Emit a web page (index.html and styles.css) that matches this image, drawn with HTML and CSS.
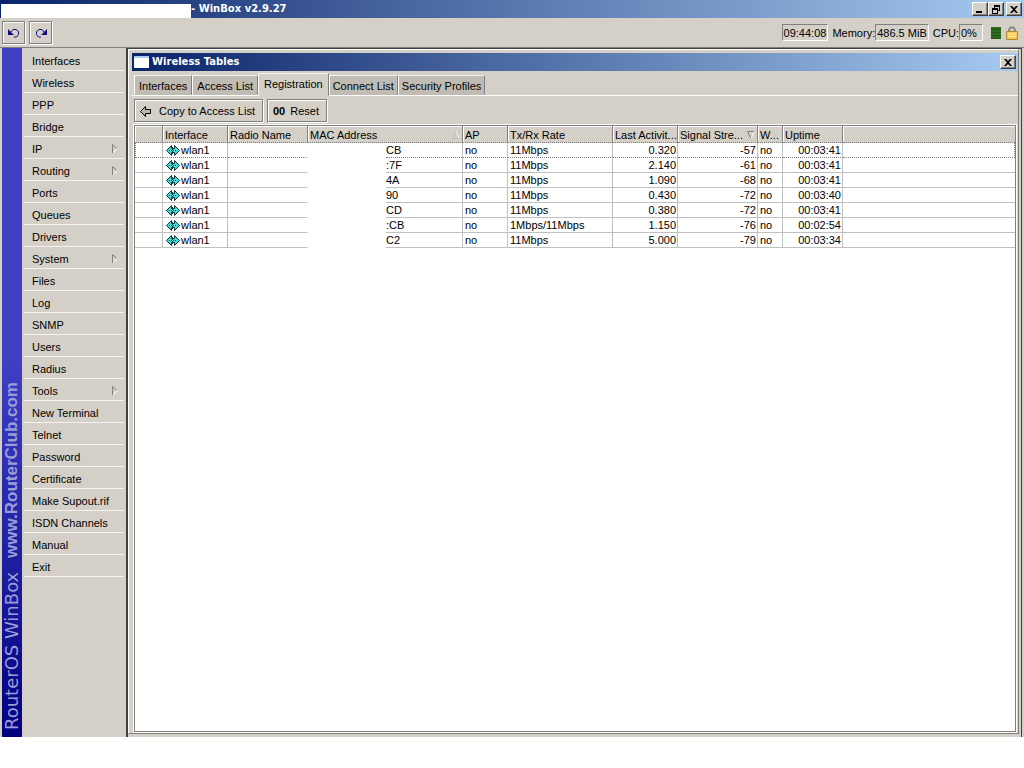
FILE: index.html
```
<!DOCTYPE html>
<html lang="en">
<head>
    <meta charset="UTF-8">
    <meta name="viewport" content="width=device-width, initial-scale=1.0">
    <title>WinBox v2.9.27</title>
    <link rel="stylesheet" href="styles.css">
</head>
<body>
    <svg class="sprite" aria-hidden="true">
        <symbol id="wlan" viewBox="0 0 14 11">
            <path d="M.5 5.500l5-5v3h3v-3l5 5-5 5v-3h-3v3z" fill="#3fe0d8" stroke="#1a3038"/>
            <path d="M6.500 2v7M3 5.500h8" stroke="#1a3038" stroke-dasharray="1 1"/>
        </symbol>
        <symbol id="close" viewBox="0 0 8 7">
            <path d="M0 0h2l2 2 2-2h2L5 3.500 8 7H6L4 5 2 7H0l3-3.500z"/>
        </symbol>
        <symbol id="arrow" viewBox="0 0 6 9">
            <path d="M5 4.500L.5 .5V9" fill="none" stroke="#808080"/>
            <path d="M5.500 4.500L1 8.500" fill="none" stroke="#fff"/>
        </symbol>
    </svg>

    <header class="titlebar">
        <div class="session"></div>
        <h1>- WinBox v2.9.27</h1>
        <div class="window-buttons">
            <button class="window-btn" aria-label="Minimize"><svg width="8" height="8"><path d="M0 6h6v2H0z"/></svg></button>
            <button class="window-btn" aria-label="Restore"><svg width="8" height="9"><path d="M2 0h6v6H6V5h1V2H3v1H2zM0 3h6v6H0zM1 5v3h4V5z" fill-rule="evenodd"/></svg></button>
            <button class="window-btn close-btn" aria-label="Close"><svg width="8" height="7"><use href="#close"/></svg></button>
        </div>
    </header>

    <div class="toolbar">
        <button class="tool-btn" aria-label="Undo"><svg width="12" height="10"><path d="M3 4l2-2.500h3l2.500 2v3L8.500 9H6" fill="none" stroke="#101080"/><path d="M0 1v6h6z" fill="#101080"/></svg></button>
        <button class="tool-btn" aria-label="Redo"><svg width="12" height="10"><path d="M9 4L7 1.500H4l-2.500 2v3L3.500 9H6" fill="none" stroke="#101080"/><path d="M12 1v6H6z" fill="#101080"/></svg></button>
        <div class="status">
            <span class="field">09:44:08</span>
            <span class="label">Memory:</span>
            <span class="field">486.5 MiB</span>
            <span class="label">CPU:</span>
            <span class="field cpu-value">0%</span>
            <span class="cpu-graph"></span>
            <svg width="12" height="14">
                <path d="M3 6V4l1.500-2.500h3L9 4v2" fill="none" stroke="#8c8678" stroke-width="2"/>
                <path d="M.5 5.500h11v8H.5z" fill="#f8c850" stroke="#b08830"/>
                <path d="M2 8h8M2 10.500h8" stroke="#fff0b0"/>
            </svg>
        </div>
    </div>

    <div class="workspace">
        <div class="banner"><span>RouterOS WinBox</span><b>www.RouterClub.com</b></div>
        <nav class="menu">
            <a href="#">Interfaces</a>
            <a href="#">Wireless</a>
            <a href="#">PPP</a>
            <a href="#">Bridge</a>
            <a href="#">IP<svg width="6" height="9"><use href="#arrow"/></svg></a>
            <a href="#">Routing<svg width="6" height="9"><use href="#arrow"/></svg></a>
            <a href="#">Ports</a>
            <a href="#">Queues</a>
            <a href="#">Drivers</a>
            <a href="#">System<svg width="6" height="9"><use href="#arrow"/></svg></a>
            <a href="#">Files</a>
            <a href="#">Log</a>
            <a href="#">SNMP</a>
            <a href="#">Users</a>
            <a href="#">Radius</a>
            <a href="#">Tools<svg width="6" height="9"><use href="#arrow"/></svg></a>
            <a href="#">New Terminal</a>
            <a href="#">Telnet</a>
            <a href="#">Password</a>
            <a href="#">Certificate</a>
            <a href="#">Make Supout.rif</a>
            <a href="#">ISDN Channels</a>
            <a href="#">Manual</a>
            <a href="#">Exit</a>
        </nav>

        <main class="desktop">
            <section class="window">
                <div class="window-title">
                    <span class="window-icon"></span>
                    <h2>Wireless Tables</h2>
                    <button class="window-btn" aria-label="Close"><svg width="8" height="7"><use href="#close"/></svg></button>
                </div>

                <div class="tabs" role="tablist">
                    <button class="tab" role="tab">Interfaces</button>
                    <button class="tab" role="tab">Access List</button>
                    <button class="tab active" role="tab" aria-selected="true">Registration</button>
                    <button class="tab" role="tab">Connect List</button>
                    <button class="tab" role="tab">Security Profiles</button>
                </div>

                <div class="actions">
                    <button class="action-btn copy"><svg width="11" height="11"><path d="M.5 5.500l5-5v3h5v4h-5v3z" fill="#b8b8b0" stroke="#000"/></svg>Copy to Access List</button>
                    <button class="action-btn"><b>00</b>Reset</button>
                </div>

                <div class="grid">
                    <table>
                        <colgroup>
                            <col class="col-flag"><col class="col-interface"><col class="col-radio"><col class="col-mac"><col class="col-ap"><col class="col-rate"><col class="col-activity"><col class="col-signal"><col class="col-wds"><col class="col-uptime"><col>
                        </colgroup>
                        <thead>
                            <tr>
                                <th></th>
                                <th>Interface</th>
                                <th>Radio Name</th>
                                <th><div class="sortable">MAC Address<svg width="8" height="8"><path d="M4 .5L.5 7.500h7" fill="none" stroke="#c0bcb4"/><path d="M4 .5l3.500 7" stroke="#f4f2ee"/></svg></div></th>
                                <th>AP</th>
                                <th>Tx/Rx Rate</th>
                                <th>Last Activit...</th>
                                <th><div class="sortable">Signal Stre...<svg width="8" height="8"><path d="M7.500 .5h-7l3.500 7" fill="none" stroke="#808080"/><path d="M7.500 .5L4 7.500" stroke="#fff"/></svg></div></th>
                                <th>W...</th>
                                <th>Uptime</th>
                                <th></th>
                            </tr>
                        </thead>
                        <tbody>
                            <tr class="focused"><td></td><td><svg width="14" height="11"><use href="#wlan"/></svg>wlan1</td><td></td><td class="mac"><span>CB</span></td><td>no</td><td>11Mbps</td><td class="num">0.320</td><td class="num">-57</td><td>no</td><td class="num">00:03:41</td><td></td></tr>
                            <tr><td></td><td><svg width="14" height="11"><use href="#wlan"/></svg>wlan1</td><td></td><td class="mac"><span>:7F</span></td><td>no</td><td>11Mbps</td><td class="num">2.140</td><td class="num">-61</td><td>no</td><td class="num">00:03:41</td><td></td></tr>
                            <tr><td></td><td><svg width="14" height="11"><use href="#wlan"/></svg>wlan1</td><td></td><td class="mac"><span>4A</span></td><td>no</td><td>11Mbps</td><td class="num">1.090</td><td class="num">-68</td><td>no</td><td class="num">00:03:41</td><td></td></tr>
                            <tr><td></td><td><svg width="14" height="11"><use href="#wlan"/></svg>wlan1</td><td></td><td class="mac"><span>90</span></td><td>no</td><td>11Mbps</td><td class="num">0.430</td><td class="num">-72</td><td>no</td><td class="num">00:03:40</td><td></td></tr>
                            <tr><td></td><td><svg width="14" height="11"><use href="#wlan"/></svg>wlan1</td><td></td><td class="mac"><span>CD</span></td><td>no</td><td>11Mbps</td><td class="num">0.380</td><td class="num">-72</td><td>no</td><td class="num">00:03:41</td><td></td></tr>
                            <tr><td></td><td><svg width="14" height="11"><use href="#wlan"/></svg>wlan1</td><td></td><td class="mac"><span>:CB</span></td><td>no</td><td>1Mbps/11Mbps</td><td class="num">1.150</td><td class="num">-76</td><td>no</td><td class="num">00:02:54</td><td></td></tr>
                            <tr><td></td><td><svg width="14" height="11"><use href="#wlan"/></svg>wlan1</td><td></td><td class="mac"><span>C2</span></td><td>no</td><td>11Mbps</td><td class="num">5.000</td><td class="num">-79</td><td>no</td><td class="num">00:03:34</td><td></td></tr>
                        </tbody>
                    </table>
                </div>
            </section>
        </main>
    </div>
</body>
</html>
```
FILE: styles.css
```
:root {
    --face: #d4d0c8;
    --shadow: #808080;
    --dark: #404040;
    --line: #c0c0c0;
    --title-gradient: linear-gradient(to right, #0a246a, #a6caf0);
}

* {
    margin: 0;
    padding: 0;
    box-sizing: border-box;
}

body {
    display: flex;
    flex-direction: column;
    height: 100vh;
    padding-bottom: 31px;
    background-color: #fff;
    color: #000;
    font-family: "Liberation Sans", Arial, sans-serif;
    font-size: 11px;
    line-height: 14px;
}

button {
    font: inherit;
    color: inherit;
    border: none;
    background-color: var(--face);
}

.sprite {
    display: none;
}

h1,
h2 {
    font-family: "DejaVu Sans", Tahoma, sans-serif;
    font-size: 10px;
    font-weight: bold;
    color: #fff;
}

/* Main title bar */
.titlebar {
    display: flex;
    align-items: center;
    height: 18px;
    padding-right: 2px;
    background: var(--title-gradient);
}

.session {
    align-self: flex-end;
    width: 190px;
    height: 14px;
    margin-left: 1px;
    background-color: #fff;
}

.window-buttons {
    display: flex;
    margin-left: auto;
}

.window-btn {
    display: flex;
    align-items: center;
    justify-content: center;
    width: 16px;
    height: 14px;
    border: 1px solid;
    border-color: #fff var(--dark) var(--dark) #fff;
    box-shadow: inset -1px -1px var(--shadow);
}

.close-btn {
    margin-left: 2px;
}

/* Toolbar */
.toolbar {
    display: flex;
    align-items: center;
    gap: 4px;
    height: 30px;
    padding: 0 6px 0 2px;
    background-color: var(--face);
    border-bottom: 1px solid var(--shadow);
}

.tool-btn {
    display: flex;
    align-items: center;
    justify-content: center;
    width: 23px;
    height: 23px;
    border: 1px solid var(--shadow);
    box-shadow: inset 1px 1px #fff, 1px 1px #fff;
}

.status {
    display: flex;
    align-items: center;
    margin-left: auto;
}

.field {
    height: 17px;
    padding: 1px;
    border: 1px solid;
    border-color: var(--shadow) #fff #fff var(--shadow);
}

.label {
    margin-left: 4px;
}

.cpu-value {
    width: 24px;
}

.cpu-graph {
    width: 10px;
    height: 12px;
    margin: 0 5px 0 8px;
    background: repeating-linear-gradient(#2f6b1d 0 2px, #245515 2px 3px);
}

/* Side menu */
.workspace {
    display: flex;
    flex: 1;
    min-height: 0;
    padding: 0 2px;
    background-color: var(--face);
}

.banner {
    display: flex;
    align-items: center;
    gap: 14px;
    width: 20px;
    padding-top: 7px;
    writing-mode: vertical-rl;
    transform: rotate(180deg);
    background: linear-gradient(to top, #4040c4 0%, #4040c4 45%, #000080 100%);
    color: #9c9cd8;
    font-size: 17px;
    line-height: 20px;
    white-space: nowrap;
}

.banner span {
    font-family: "DejaVu Sans", Verdana, sans-serif;
    font-size: 18px;
}

.menu {
    width: 104px;
    padding: 1px 2px;
}

.menu a {
    display: flex;
    align-items: center;
    justify-content: space-between;
    height: 22px;
    padding: 2px 6px 0 8px;
    border-bottom: 1px solid #f4f2ee;
    color: #000;
    text-decoration: none;
}

/* Wireless window */
.desktop {
    display: flex;
    flex: 1;
    min-width: 0;
    padding: 0 2px 3px 0;
    border-top: 1px solid var(--dark);
    border-left: 2px solid var(--dark);
    border-right: 1px solid var(--dark);
}

.window {
    display: flex;
    flex: 1;
    flex-direction: column;
    min-width: 0;
    padding: 3px 0 1px 3px;
    border: 1px solid;
    border-color: #fff var(--shadow) var(--shadow) #fff;
}

.window-title {
    display: flex;
    align-items: center;
    height: 18px;
    padding: 0 2px;
    background: var(--title-gradient);
}

.window-icon {
    width: 15px;
    height: 12px;
    margin-right: 3px;
    background-color: #fff;
    border-top: 2px solid #a6caf0;
}

.window-title .window-btn {
    margin-left: auto;
}

.tabs {
    display: flex;
    align-items: flex-end;
    height: 25px;
    padding-left: 2px;
    border-bottom: 1px solid #fff;
}

.tab {
    height: 20px;
    padding: 2px 4px 0;
    background-color: #c0bcb4;
    border: 1px solid;
    border-color: #f4f2ee var(--shadow) transparent #fff;
    white-space: nowrap;
}

.tab.active {
    height: 23px;
    margin-bottom: -1px;
    padding: 0 5px 2px;
    background-color: var(--face);
}

.active ~ .tab {
    padding: 2px 3px 0;
}

.actions {
    display: flex;
    gap: 4px;
    padding: 3px 2px;
}

.action-btn {
    display: flex;
    align-items: center;
    gap: 5px;
    height: 23px;
    padding: 1px 7px 0 5px;
    border: 1px solid var(--shadow);
    box-shadow: inset 1px 1px #fff, 1px 1px #fff;
}

.action-btn.copy {
    gap: 8px;
}

/* Registration table */
.grid {
    flex: 1;
    margin: 0 2px;
    border: 1px solid var(--shadow);
    outline: 1px solid #fff;
    background-color: #fff;
}

table {
    width: 100%;
    table-layout: fixed;
    border-collapse: separate;
    border-spacing: 0;
}

.col-flag { width: 28px; }
.col-interface { width: 65px; }
.col-radio { width: 80px; }
.col-mac { width: 155px; }
.col-ap { width: 45px; }
.col-rate { width: 105px; }
.col-activity { width: 65px; }
.col-signal { width: 80px; }
.col-wds { width: 25px; }
.col-uptime { width: 60px; }

th {
    height: 17px;
    padding: 2px 0 0 2px;
    background-color: var(--face);
    border-right: 1px solid var(--shadow);
    border-bottom: 1px dotted var(--shadow);
    box-shadow: inset 1px 1px #fff;
    font-weight: normal;
    text-align: left;
    white-space: nowrap;
}

.sortable {
    display: flex;
    align-items: center;
    justify-content: space-between;
    padding-right: 2px;
}

td {
    height: 15px;
    padding: 0 2px;
    border-right: 1px solid var(--line);
    border-bottom: 1px solid var(--line);
    white-space: nowrap;
}

td svg {
    margin: 0 1px;
    vertical-align: -2px;
}

td:last-child,
th:last-child {
    border-right: none;
}

td:nth-child(3) {
    border-right-color: #fff;
}

.focused td {
    border-bottom: 1px dotted var(--shadow);
}

.focused td:first-child {
    border-left: 1px dotted var(--shadow);
}

.focused td:last-child {
    border-right: 1px dotted var(--shadow);
}

.num {
    padding-right: 1px;
    text-align: right;
}

/* address prefix stays blank, without grid lines */
.focused td.mac,
td.mac {
    padding: 0;
    border-bottom: none;
}

.mac span {
    display: block;
    height: 15px;
    margin-left: 78px;
    border-bottom: 1px solid var(--line);
}

.focused .mac span {
    border-bottom: 1px dotted var(--shadow);
}
```
